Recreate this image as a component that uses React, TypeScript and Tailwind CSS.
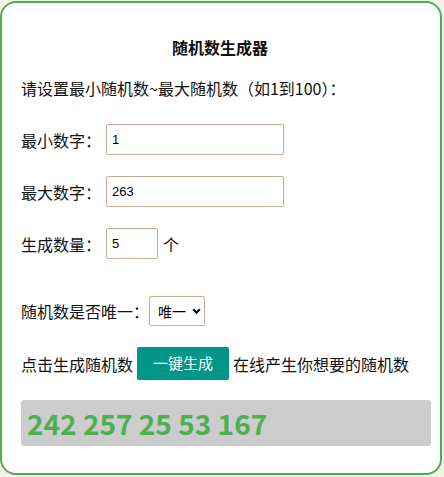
import React from "react";

const cjk = { fontFamily: '"Noto Sans CJK SC", "Noto Sans", sans-serif' };
const arial = { fontFamily: '"Liberation Sans", "Noto Sans CJK SC", sans-serif' };

export default function App() {
  return (
    <div className="w-[444px] h-[477px] bg-[#f5f1e8] pt-[1px]" style={cjk}>
      <div className="w-[442px] h-[474px] bg-white border-2 border-[#4caf50] rounded-[16px] pl-[19px] pr-[9px] pt-[32px] text-[16px] text-[#111]">
        <div className="h-[24px] leading-[24px] text-center font-bold pr-[12px]">随机数生成器</div>
        <div className="mt-[17px] h-[24px] leading-[24px]">请设置最小随机数~最大随机数（如1到100）：</div>

        <div className="mt-[24px] flex items-center h-[31px]">
          <span>最小数字：</span>
          <input
            defaultValue="1"
            className="ml-[5px] w-[178px] h-[31px] border border-[#d2a890] rounded-[2px] px-[5px] text-[13px] text-black outline-none"
            style={arial}
          />
        </div>
        <div className="mt-[21px] flex items-center h-[31px]">
          <span>最大数字：</span>
          <input
            defaultValue="263"
            className="ml-[5px] w-[178px] h-[31px] border border-[#d2a890] rounded-[2px] px-[5px] text-[13px] text-black outline-none"
            style={arial}
          />
        </div>
        <div className="mt-[21px] flex items-center h-[31px]">
          <span>生成数量：</span>
          <input
            defaultValue="5"
            className="ml-[5px] w-[52px] h-[31px] border border-[#d2a890] rounded-[2px] px-[5px] text-[13px] text-black outline-none"
            style={arial}
          />
          <span className="ml-[5px]">个</span>
        </div>

        <div className="mt-[37px] flex items-center h-[30px]">
          <span>随机数是否唯一：</span>
          <div className="relative w-[56px] h-[30px]">
            <select
              defaultValue="1"
              className="appearance-none w-[56px] h-[30px] border border-[#d2a890] rounded-[2px] pl-[8px] text-[14px] text-black bg-white outline-none"
              style={cjk}
            >
              <option value="1">唯一</option>
              <option value="0">不唯一</option>
            </select>
            <svg
              className="absolute right-[4px] top-[12px] pointer-events-none"
              width="9"
              height="7"
              viewBox="0 0 9 7"
            >
              <path d="M1.2 1.3 L4.5 4.6 L7.8 1.3" fill="none" stroke="#111" strokeWidth="2.2" />
            </svg>
          </div>
        </div>

        <div className="mt-[21px] flex items-center h-[33px] whitespace-nowrap">
          <span>点击生成随机数</span>
          <button className="ml-[4px] w-[92px] h-[33px] bg-[#009688] text-white text-[15px] rounded-[2px]">
            一键生成
          </button>
          <span className="ml-[4px]">在线产生你想要的随机数</span>
        </div>

        <div className="mt-[20px] h-[46px] bg-[#cccccc] rounded-[3px] flex items-center px-[6px]">
          <span className="text-[28px] font-bold text-[#4caf50] leading-none">242 257 25 53 167</span>
        </div>
      </div>
    </div>
  );
}
